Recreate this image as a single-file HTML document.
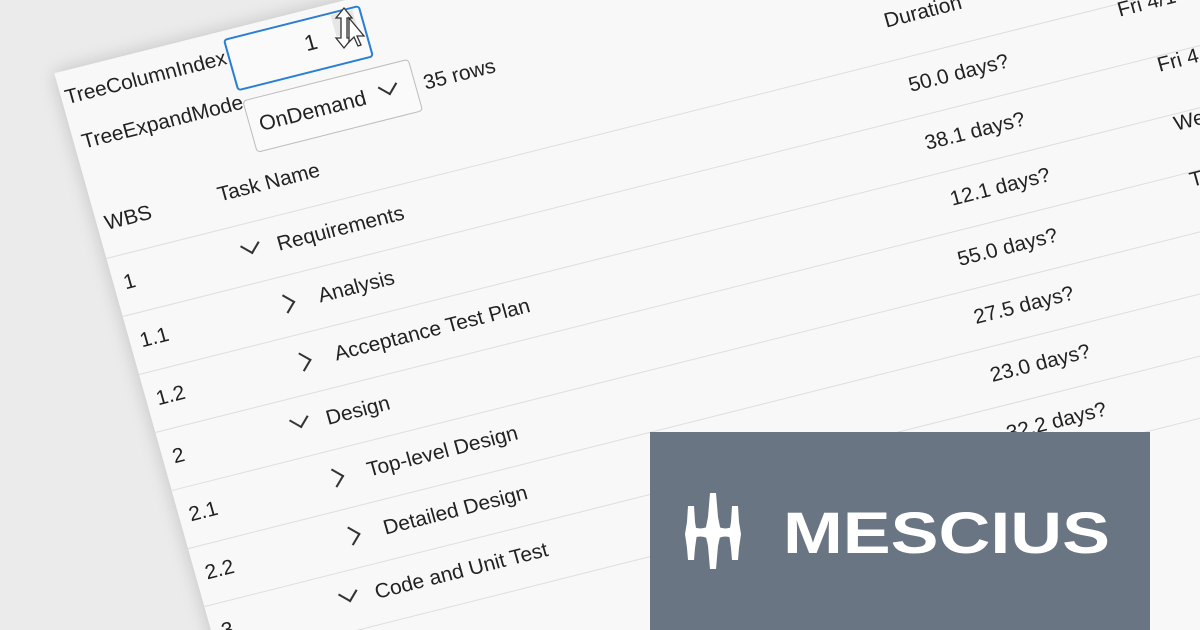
<!DOCTYPE html>
<html style="width:1200px;height:630px;overflow:hidden"><head><meta charset="utf-8"><style>
*{margin:0;padding:0;box-sizing:border-box}
body{width:1200px;height:630px;overflow:hidden;background:#ebebeb;position:relative;font-family:"Liberation Sans",sans-serif;color:#222}
#wrap{position:absolute;left:0;top:0;width:1200px;height:630px;overflow:hidden}
#panel{position:absolute;left:0;top:0;width:1400px;height:900px;background:#f8f8f8;transform-origin:0 0;transform:matrix(0.99,-0.249,0.272,0.967,54.3,73.3);box-shadow:0 0 18px rgba(0,0,0,.18)}
#panel div{position:absolute;white-space:nowrap}
.t{font-size:20.5px;line-height:24px;height:24px}
.line{height:1px;background:#dedede;left:0;width:1400px}
.chev{width:14px;height:14px;border-right:2px solid #333;border-bottom:2px solid #333}
#logo{position:absolute;left:650px;top:432px;width:500px;height:198px;background:#6a7583}
</style></head><body>
<div id="wrap">
<div id="panel">
  <div class="t" style="left:4px;top:15px">TreeColumnIndex</div>
  <div style="left:168px;top:8px;width:138px;height:54px;border:2px solid #2a7fd4;border-radius:4px;background:#fafafa"></div>
  <div class="t" style="left:244px;top:21px;font-size:22px">1</div>
  <div style="left:276px;top:11px;width:22px;height:22px;background:#e6e6e6"></div>
  <div style="left:170px;top:72px;width:168px;height:54px;border:1px solid #bdbdbd;border-radius:4px;background:#fafafa"></div>
  <div class="t" style="left:180px;top:88px;font-size:21px">OnDemand</div>
  <div class="chev" style="left:304px;top:86px;transform:rotate(45deg)"></div>
  <div class="t" style="left:346px;top:88px">35 rows</div>
  <div class="t" style="left:8px;top:62px">TreeExpandMode</div>

  <div class="t" style="left:8px;top:146px">WBS</div>
  <div class="t" style="left:122px;top:146px">Task Name</div>
  <div class="t" style="left:797px;top:140px">Duration</div>
  <div class="t" style="left:1020px;top:128px">Fri 4/1</div>
  <div class="line" style="top:191px"></div>

  <div class="t" style="left:10px;top:208px">1</div>
  <div class="chev" style="left:132px;top:206px;transform:rotate(45deg)"></div>
  <div class="t" style="left:165px;top:208px">Requirements</div>
  <div class="t" style="left:803px;top:208px">50.0 days?</div>
  <div class="t" style="left:1020px;top:186px">Fri 4/1</div>
  <div class="line" style="top:251px"></div>

  <div class="t" style="left:10px;top:268px">1.1</div>
  <div class="chev" style="left:150px;top:272px;transform:rotate(-45deg)"></div>
  <div class="t" style="left:190px;top:268px">Analysis</div>
  <div class="t" style="left:803px;top:268px">38.1 days?</div>
  <div class="t" style="left:1043px;top:249px">Fri 4/1</div>
  <div class="line" style="top:311px"></div>

  <div class="t" style="left:10px;top:328px">1.2</div>
  <div class="chev" style="left:150px;top:332px;transform:rotate(-45deg)"></div>
  <div class="t" style="left:190px;top:328px">Acceptance Test Plan</div>
  <div class="t" style="left:812px;top:328px">12.1 days?</div>
  <div class="t" style="left:1043px;top:310px">Wed 4/1</div>
  <div class="line" style="top:371px"></div>

  <div class="t" style="left:10px;top:388px">2</div>
  <div class="chev" style="left:132px;top:386px;transform:rotate(45deg)"></div>
  <div class="t" style="left:165px;top:388px">Design</div>
  <div class="t" style="left:803px;top:388px">55.0 days?</div>
  <div class="t" style="left:1043px;top:368px">Thu 4/1</div>
  <div class="line" style="top:431px"></div>

  <div class="t" style="left:10px;top:448px">2.1</div>
  <div class="chev" style="left:150px;top:452px;transform:rotate(-45deg)"></div>
  <div class="t" style="left:190px;top:448px">Top-level Design</div>
  <div class="t" style="left:803px;top:448px">27.5 days?</div>
  <div class="line" style="top:491px"></div>

  <div class="t" style="left:10px;top:508px">2.2</div>
  <div class="chev" style="left:150px;top:512px;transform:rotate(-45deg)"></div>
  <div class="t" style="left:190px;top:508px">Detailed Design</div>
  <div class="t" style="left:803px;top:508px">23.0 days?</div>
  <div class="line" style="top:551px"></div>

  <div class="t" style="left:10px;top:568px">3</div>
  <div class="chev" style="left:132px;top:566px;transform:rotate(45deg)"></div>
  <div class="t" style="left:165px;top:568px">Code and Unit Test</div>
  <div class="t" style="left:803px;top:568px">32.2 days?</div>
  <div class="line" style="top:611px"></div>
</div>

<svg style="position:absolute;left:330px;top:4px" width="40" height="50" viewBox="0 0 40 50">
  <path d="M14 4 L6 14 L11 14 L11 34 L6 34 L14 44 L22 34 L17 34 L17 14 L22 14 Z" fill="#fff" stroke="#333" stroke-width="1.3"/>
  <path d="M19 14 L19 38 L24 33 L28 42 L31 41 L27 32 L34 32 Z" fill="#fff" stroke="#333" stroke-width="1.3"/>
</svg>

<div id="logo">
<svg width="500" height="198" viewBox="0 0 500 198">
  <path d="M60 61 L66 61 L68 85 L71 100 L68 114 L66 137 L60 137 L58 114 L55 100 L58 85 Z" fill="#fff"/>
  <path d="M38 74 L44 74 L45 90 L47 102 L45 116 L44 128 L38 128 L37 116 L35 102 L37 90 Z" fill="#fff"/>
  <path d="M82 74 L88 74 L89 90 L91 102 L89 116 L88 128 L82 128 L81 116 L79 102 L81 90 Z" fill="#fff"/>
  <path d="M44 95 Q50 98 57 95 L57 106 Q50 103 44 106 Z" fill="#fff"/>
  <path d="M69 95 Q75 98 82 95 L82 106 Q75 103 69 106 Z" fill="#fff"/>
  <text x="133" y="121" font-family="Liberation Sans, sans-serif" font-weight="bold" font-size="58" fill="#fff" textLength="327" lengthAdjust="spacingAndGlyphs">MESCIUS</text>
</svg>
</div>
</div>
</body></html>
